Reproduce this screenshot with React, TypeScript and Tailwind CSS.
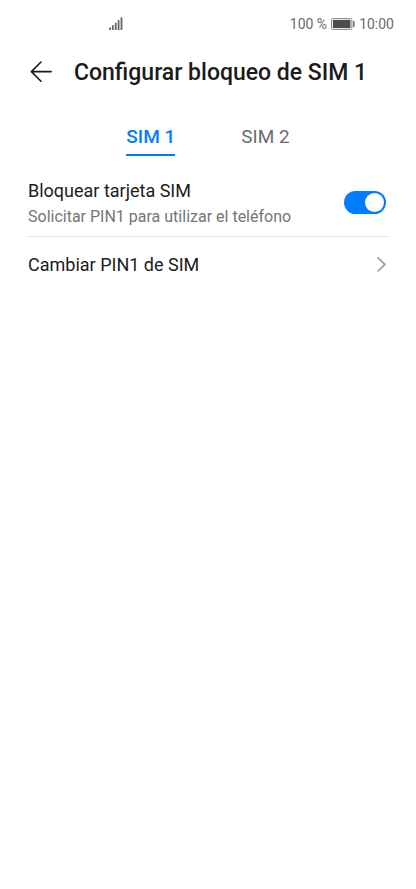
import React, { useState } from "react";

const tabs = ["SIM 1", "SIM 2"];

const StatusBar: React.FC = () => (
  <div className="flex h-12 items-center justify-between pl-27 pr-[22px] text-sm text-[#6b6b6b]">
    <svg width="16" height="14" viewBox="0 0 16 14" fill="#666666" aria-hidden="true">
      <rect x="1" y="10.5" width="1.8" height="2.5" />
      <rect x="3.9" y="8.2" width="1.8" height="4.8" />
      <rect x="6.8" y="5.8" width="1.8" height="7.2" />
      <rect x="9.7" y="3.2" width="1.8" height="9.8" />
      <rect x="12.6" y="0.3" width="1.8" height="12.7" />
    </svg>
    <div className="flex items-center gap-1">
      <span>100 %</span>
      <svg width="24" height="12" viewBox="0 0 24 12" aria-hidden="true">
        <rect x="0.5" y="0.5" width="20.4" height="11" rx="1.2" fill="#e6e6e6" stroke="#8f8f8f" />
        <rect x="2" y="2" width="17.4" height="8" fill="#4d4d4d" />
        <rect x="22" y="3" width="1.6" height="6" rx="0.5" fill="#707070" />
      </svg>
      <span>10:00</span>
    </div>
  </div>
);

const App: React.FC = () => {
  const [activeTab, setActiveTab] = useState<string>(tabs[0]);
  const [isLocked, setIsLocked] = useState<boolean>(true);

  return (
    <div className="min-h-screen w-full bg-white font-['Roboto',sans-serif] text-[#1b1b1b]">
      <StatusBar />
      {/* Header */}
      <header className="flex h-[50px] items-center gap-5 pl-7">
        <button type="button" aria-label="Atrás">
          <svg width="26" height="24" viewBox="0 0 26 24" fill="none" stroke="#1b1b1b" strokeWidth="1.6" strokeLinecap="round" strokeLinejoin="round">
            <path d="M13 1L3.4 10.6L13 20.2M3.4 10.6H23.2" />
          </svg>
        </button>
        <h1 className="text-[23px] font-medium">Configurar bloqueo de {activeTab}</h1>
      </header>
      {/* Tabs */}
      <div role="tablist" className="flex justify-center gap-[66px] pt-[26px]">
        {tabs.map((tab) => (
          <button
            key={tab}
            type="button"
            role="tab"
            aria-selected={tab === activeTab}
            onClick={() => setActiveTab(tab)}
            className={`border-b-2 pb-1 text-[19px] leading-[26px] ${
              tab === activeTab
                ? "border-[#007dff] font-medium text-[#007dff]"
                : "border-transparent text-[#6b6b6b]"
            }`}
          >
            {tab}
          </button>
        ))}
      </div>
      <main className="px-7 pt-[23px]">
        {/* Lock switch */}
        <div className="flex items-start justify-between border-b border-[#e5e5e5] pb-[5px]">
          <label htmlFor="sim-lock">
            <span className="block text-lg leading-6">Bloquear tarjeta SIM</span>
            <span className="block text-base leading-7 text-[#757575]">
              Solicitar PIN1 para utilizar el teléfono
            </span>
          </label>
          <input
            id="sim-lock"
            type="checkbox"
            role="switch"
            checked={isLocked}
            onChange={(e) => setIsLocked(e.target.checked)}
            className="mt-3 mr-0.5 flex h-[23px] w-[42px] cursor-pointer appearance-none items-center rounded-full bg-gray-300 p-0.5 before:size-[19px] before:rounded-full before:bg-white checked:justify-end checked:bg-[#007dff]"
          />
        </div>
        {/* Change PIN */}
        <button type="button" className="flex h-14 w-full items-center justify-between text-left text-lg">
          <span>Cambiar PIN1 de SIM</span>
          <svg width="12" height="16" viewBox="0 0 12 16" fill="none" stroke="#9a9a9a" strokeWidth="1.6" strokeLinecap="round" strokeLinejoin="round" aria-hidden="true">
            <path d="M2 0.8L9 7.4L2 14" />
          </svg>
        </button>
      </main>
    </div>
  );
};

export default App;
